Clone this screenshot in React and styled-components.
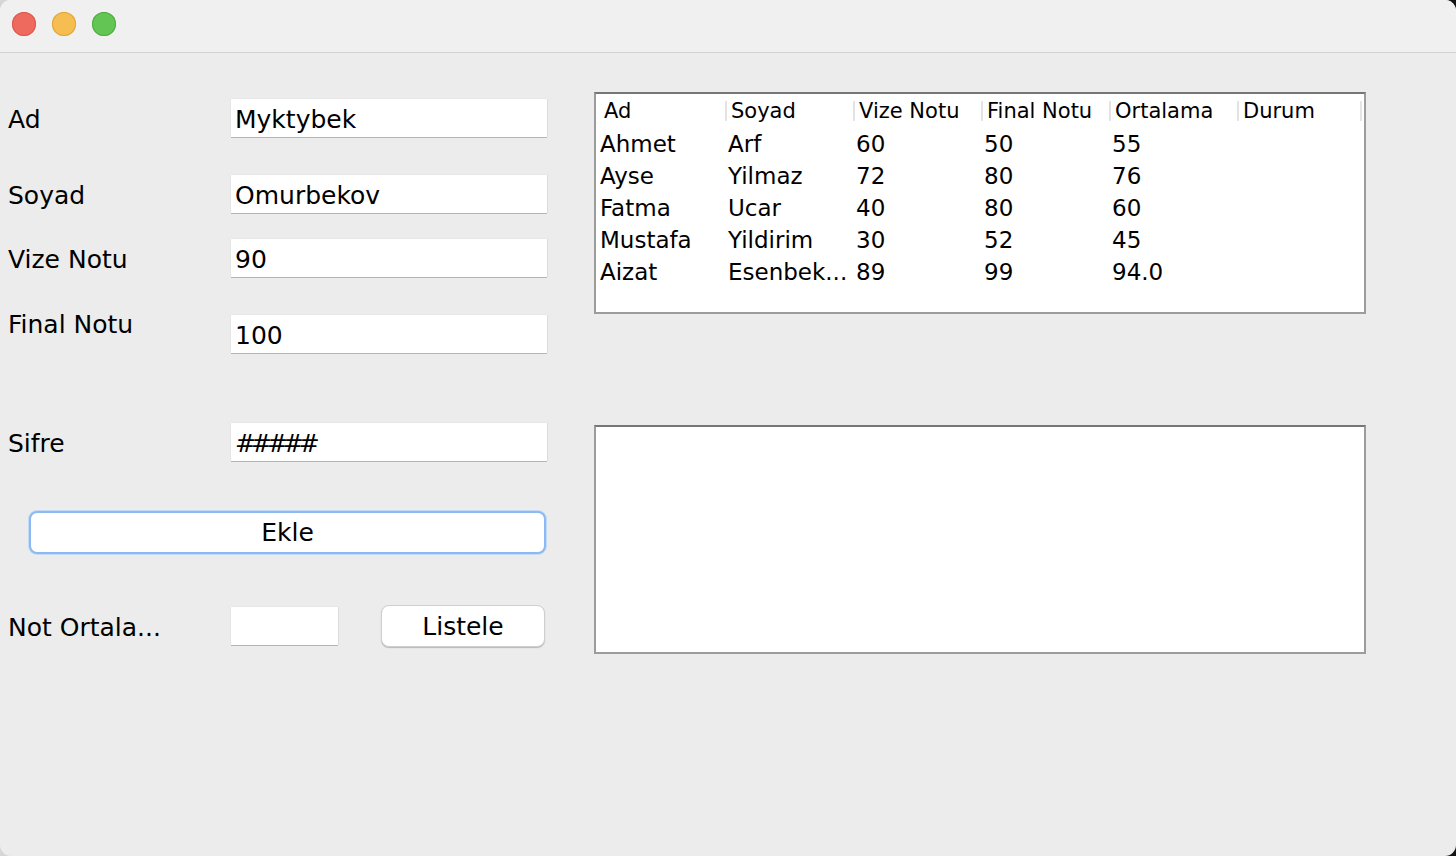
import React from "react";
import styled, { createGlobalStyle } from "styled-components";

const Global = createGlobalStyle`
  html, body {
    margin: 0;
    padding: 0;
    width: 1456px;
    height: 856px;
    overflow: hidden;
    background: linear-gradient(to right, #d6d6d6 0%, #d6d6d6 50%, #141414 50%, #141414 100%);
  }
  * { box-sizing: border-box; }
`;

const Window = styled.div`
  width: 1456px;
  height: 856px;
  border-radius: 11px;
  overflow: hidden;
  background: #ececec;
  display: flex;
  flex-direction: column;
  font-family: "DejaVu Sans", "Liberation Sans", sans-serif;
  color: #000;
`;

const TitleBar = styled.div`
  height: 53px;
  flex: none;
  background: #f0f0f0;
  border-bottom: 1px solid #d2d2d2;
  display: flex;
  align-items: center;
  gap: 16px;
  padding: 0 0 4px 12px;
`;

const Light = styled.span`
  width: 24px;
  height: 24px;
  border-radius: 50%;
  background: ${(p) => p.$c};
  box-shadow: inset 0 0 0 1px ${(p) => p.$b};
`;

const Content = styled.div`
  flex: 1;
  display: flex;
`;

const LeftPanel = styled.div`
  width: 594px;
  flex: none;
  display: flex;
  flex-direction: column;
  padding-left: 8px;
`;

const Row = styled.div`
  display: grid;
  grid-template-columns: 223px 316px;
  align-items: center;
  height: 38px;
  margin-top: ${(p) => p.$mt}px;
`;

const Label = styled.div`
  font-size: 25px;
  line-height: 30px;
  padding-top: 3px;
  white-space: nowrap;
  transform: translateY(${(p) => (p.$shift || 0)}px);
`;

const Field = styled.div`
  height: 38px;
  background: #fff;
  box-shadow: 0 1px 0 #b4b4b4, 1px 0 0 #dcdcdc, -1px 0 0 #e6e6e6, 0 -1px 0 #e6e6e6;
  font-size: 25px;
  line-height: 38px;
  padding: 2px 0 0 4px;
  white-space: nowrap;
  overflow: hidden;
  letter-spacing: ${(p) => (p.$tight ? "-5px" : "normal")};
  width: ${(p) => p.$w || 316}px;
`;

const ButtonRow = styled.div`
  margin-top: ${(p) => p.$mt}px;
  padding-left: ${(p) => p.$pl}px;
`;

const Button = styled.div`
  height: ${(p) => p.$h}px;
  width: ${(p) => p.$w}px;
  background: #fff;
  border-radius: 8px;
  font-size: 25px;
  display: flex;
  align-items: center;
  justify-content: center;
  border: ${(p) => (p.$focus ? "2px solid #8cb9ef" : "1px solid #cfcfcf")};
  box-shadow: ${(p) => (p.$focus ? "0 0 0 1px #c3dbf7" : "0 1px 1px #b9b9b9")};
`;

const BottomRow = styled.div`
  display: flex;
  align-items: center;
  height: 42px;
  margin-top: ${(p) => p.$mt}px;
`;

const BottomLabel = styled(Label)`
  width: 223px;
  flex: none;
`;

const RightPanel = styled.div`
  display: flex;
  flex-direction: column;
  padding-top: 39px;
`;

const TableBox = styled.div`
  width: 772px;
  height: 222px;
  background: #fff;
  border: 2px solid #9c9c9c;
  border-top-color: #767676;
`;

const Grid = styled.div`
  display: grid;
  grid-template-columns: repeat(6, 128px);
`;

const HeadCell = styled.div`
  position: relative;
  height: 33px;
  font-size: 21px;
  line-height: 33px;
  padding: 1px 0 0 ${(p) => (p.$first ? 8 : 7)}px;
  white-space: nowrap;
  &::before {
    content: "";
    display: ${(p) => (p.$first ? "none" : "block")};
    position: absolute;
    left: 1px;
    top: 7px;
    bottom: 6px;
    width: 2px;
    background: #e4e4e4;
  }
  &::after {
    content: "";
    display: ${(p) => (p.$last ? "block" : "none")};
    position: absolute;
    right: 2px;
    top: 7px;
    bottom: 6px;
    width: 2px;
    background: #e4e4e4;
  }
`;

const Cell = styled.div`
  height: 32px;
  font-size: 23px;
  line-height: 32px;
  padding: 1px 0 0 4px;
  white-space: nowrap;
  overflow: hidden;
`;

const EmptyBox = styled.div`
  margin-top: 111px;
  width: 772px;
  height: 229px;
  background: #fff;
  border: 2px solid #9c9c9c;
  border-top-color: #767676;
`;

const headers = ["Ad", "Soyad", "Vize Notu", "Final Notu", "Ortalama", "Durum"];
const rows = [
  ["Ahmet", "Arf", "60", "50", "55", ""],
  ["Ayse", "Yilmaz", "72", "80", "76", ""],
  ["Fatma", "Ucar", "40", "80", "60", ""],
  ["Mustafa", "Yildirim", "30", "52", "45", ""],
  ["Aizat", "Esenbek...", "89", "99", "94.0", ""],
];

export default function App() {
  return (
    <>
      <Global />
      <Window>
        <TitleBar>
          <Light $c="#ee6a5f" $b="#d9574c" />
          <Light $c="#f6be50" $b="#dea23a" />
          <Light $c="#62c554" $b="#4faa42" />
        </TitleBar>
        <Content>
          <LeftPanel>
            <Row $mt={46}>
              <Label>Ad</Label>
              <Field>Myktybek</Field>
            </Row>
            <Row $mt={38}>
              <Label>Soyad</Label>
              <Field>Omurbekov</Field>
            </Row>
            <Row $mt={26}>
              <Label>Vize Notu</Label>
              <Field>90</Field>
            </Row>
            <Row $mt={38}>
              <Label $shift={-11}>Final Notu</Label>
              <Field>100</Field>
            </Row>
            <Row $mt={70}>
              <Label>Sifre</Label>
              <Field $tight>#####</Field>
            </Row>
            <ButtonRow $mt={50} $pl={21}>
              <Button $focus $w={517} $h={43}>Ekle</Button>
            </ButtonRow>
            <BottomRow $mt={51}>
              <BottomLabel>Not Ortala...</BottomLabel>
              <Field $w={107}></Field>
              <ButtonRow $mt={0} $pl={43}>
                <Button $w={164} $h={42}>Listele</Button>
              </ButtonRow>
            </BottomRow>
          </LeftPanel>
          <RightPanel>
            <TableBox>
              <Grid>
                {headers.map((h, i) => (
                  <HeadCell key={h} $first={i === 0} $last={i === headers.length - 1}>
                    {h}
                  </HeadCell>
                ))}
                {rows.map((r, ri) =>
                  r.map((c, ci) => <Cell key={ri + "-" + ci}>{c}</Cell>)
                )}
              </Grid>
            </TableBox>
            <EmptyBox />
          </RightPanel>
        </Content>
      </Window>
    </>
  );
}
